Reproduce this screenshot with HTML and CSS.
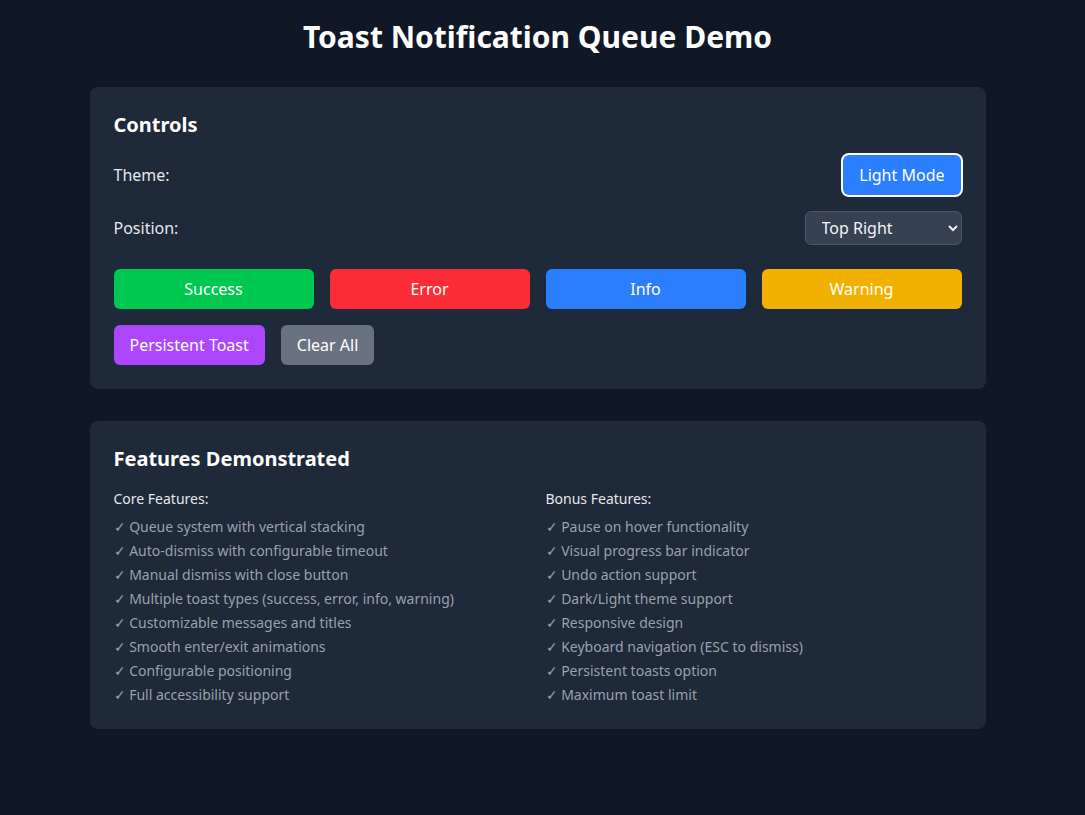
FILE: index.html
```html
<!DOCTYPE html>
<html lang="en">
<head>
<meta charset="utf-8">
<title>Toast Notification Queue Demo</title>
<link rel="stylesheet" href="styles.css">
</head>
<body>
<main class="page">
  <h1 class="title">Toast Notification Queue Demo</h1>

  <section class="card">
    <h2 class="card-title">Controls</h2>
    <div class="row">
      <span class="label">Theme:</span>
      <button class="btn btn-blue btn-focus">Light Mode</button>
    </div>
    <div class="row">
      <span class="label">Position:</span>
      <select class="select">
        <option>Top Right</option>
        <option>Top Left</option>
        <option>Bottom Right</option>
        <option>Bottom Left</option>
      </select>
    </div>
    <div class="type-grid">
      <button class="btn btn-green">Success</button>
      <button class="btn btn-red">Error</button>
      <button class="btn btn-blue">Info</button>
      <button class="btn btn-yellow">Warning</button>
    </div>
    <div class="extra-row">
      <button class="btn btn-purple">Persistent Toast</button>
      <button class="btn btn-gray">Clear All</button>
    </div>
  </section>

  <section class="card">
    <h2 class="card-title features-title">Features Demonstrated</h2>
    <div class="features">
      <div>
        <h3 class="feat-head">Core Features:</h3>
        <ul class="feat-list">
          <li>✓ Queue system with vertical stacking</li>
          <li>✓ Auto-dismiss with configurable timeout</li>
          <li>✓ Manual dismiss with close button</li>
          <li>✓ Multiple toast types (success, error, info, warning)</li>
          <li>✓ Customizable messages and titles</li>
          <li>✓ Smooth enter/exit animations</li>
          <li>✓ Configurable positioning</li>
          <li>✓ Full accessibility support</li>
        </ul>
      </div>
      <div>
        <h3 class="feat-head">Bonus Features:</h3>
        <ul class="feat-list">
          <li>✓ Pause on hover functionality</li>
          <li>✓ Visual progress bar indicator</li>
          <li>✓ Undo action support</li>
          <li>✓ Dark/Light theme support</li>
          <li>✓ Responsive design</li>
          <li>✓ Keyboard navigation (ESC to dismiss)</li>
          <li>✓ Persistent toasts option</li>
          <li>✓ Maximum toast limit</li>
        </ul>
      </div>
    </div>
  </section>
</main>
</body>
</html>
```

FILE: styles.css
```css
* { box-sizing: border-box; }
html, body { margin: 0; padding: 0; }
body {
  background: #101828;
  color: #f3f4f6;
  font-family: "Noto Sans", "Open Sans", sans-serif;
  min-height: 100vh;
  padding-right: 10px;
}
.page {
  max-width: 896px;
  margin: 0 auto;
  padding: 19px 0 40px;
}
.title {
  margin: 0 0 32px;
  text-align: center;
  font-size: 30px;
  line-height: 36px;
  font-weight: 700;
  color: #ffffff;
}
.card {
  background: #1e2939;
  border-radius: 8px;
  padding: 24px;
  margin-bottom: 32px;
}
.card-title {
  margin: 0 0 16px;
  font-size: 20px;
  line-height: 28px;
  font-weight: 700;
  color: #ffffff;
}
.row {
  display: flex;
  align-items: center;
  justify-content: space-between;
  margin-bottom: 16px;
}
.row + .row { margin-bottom: 24px; }
.label {
  font-size: 16px;
  line-height: 24px;
  color: #e5e7eb;
}
.btn {
  font-family: inherit;
  font-size: 16px;
  line-height: 24px;
  color: #ffffff;
  border: none;
  border-radius: 6px;
  padding: 8px 16px;
  cursor: pointer;
}
.btn-focus { box-shadow: 0 0 0 2px #ffffff; margin-right: 1px; }
.btn-blue { background: #2b7fff; }
.btn-green { background: #00c951; }
.btn-red { background: #fb2c36; }
.btn-yellow { background: #f0b100; }
.btn-purple { background: #ad46ff; }
.btn-gray { background: #6a7282; }
.select {
  font-family: inherit;
  font-size: 16px;
  line-height: 24px;
  color: #f3f4f6;
  background-color: #364153;
  border: 1px solid #4a5565;
  border-radius: 6px;
  padding: 4px 8px 4px 12px;
  width: 157px;
  height: 34px;
}
.type-grid {
  display: grid;
  grid-template-columns: repeat(4, 1fr);
  gap: 16px;
  margin-bottom: 16px;
}
.extra-row {
  display: flex;
  gap: 16px;
}
.features-title { margin-bottom: 16px; }
.features {
  display: grid;
  grid-template-columns: 1fr 1fr;
  gap: 16px;
}
.feat-head {
  margin: 0 0 8px;
  font-size: 14px;
  line-height: 20px;
  font-weight: 400;
  color: #e5e7eb;
}
.feat-list {
  list-style: none;
  margin: 0;
  padding: 0;
  display: flex;
  flex-direction: column;
  gap: 4px;
}
.feat-list li {
  font-size: 14px;
  line-height: 20px;
  color: #99a1af;
}
```
